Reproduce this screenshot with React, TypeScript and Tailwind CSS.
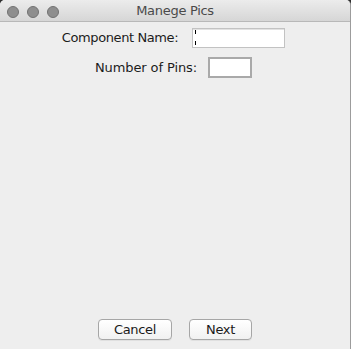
const font = { fontFamily: '"DejaVu Sans", "Liberation Sans", sans-serif' };

function TrafficLight() {
  return <span className="block h-[12px] w-[12px] rounded-full border border-[#727272] bg-[#8e8e8e]" />;
}

function MacButton({ label, width }: { label: string; width: string }) {
  return (
    <button
      className={`flex h-[21px] ${width} items-center justify-center rounded-[4px] border border-[#a6a6a6] bg-gradient-to-b from-white to-[#f1f1f1] text-[13px] tracking-[-0.3px] text-[#1a1a1a] shadow-[0_1px_0_rgba(0,0,0,0.06)]`}
    >
      {label}
    </button>
  );
}

export default function App() {
  return (
    <div className="h-[349px] w-[351px] bg-[#2e2e2e]" style={font}>
      <div className="flex h-full w-full flex-col overflow-hidden rounded-t-[5px] border-r border-[#9c9c9c] bg-[#eeeeee]">
        {/* title bar */}
        <div className="relative flex h-[22px] shrink-0 items-center justify-center border-b border-[#b8b8b8] bg-gradient-to-b from-[#ececec] to-[#d6d6d6]">
          <div className="absolute left-[7px] top-[6px] flex gap-[8px]">
            <TrafficLight />
            <TrafficLight />
            <TrafficLight />
          </div>
          <span className="text-[13px] tracking-[-0.3px] text-[#4a4a4a]">Manege Pics</span>
        </div>

        {/* form */}
        <div className="flex flex-1 flex-col pt-[6px]">
          <div className="flex items-center justify-center gap-[14px] pr-[3px]">
            <span className="text-[13px] tracking-[-0.4px] text-[#1c1c1c]">Component Name:</span>
            <div className="relative h-[20px] w-[93px] border border-[#c2c2c2] bg-white shadow-[inset_0_1px_0_#e2e2e2]">
              <span className="absolute left-[2px] top-[1px] h-[4px] w-px bg-black" />
              <span className="absolute left-[2px] top-[12px] h-[4px] w-px bg-black" />
            </div>
          </div>
          <div className="mt-[9px] flex items-center justify-center gap-[11px] pr-[3px]">
            <span className="text-[13px] tracking-[-0.1px] text-[#1c1c1c]">Number of Pins:</span>
            <div className="h-[21px] w-[44px] border-2 border-[#a9a9a9] bg-white" />
          </div>
        </div>

        {/* footer */}
        <div className="flex shrink-0 justify-center gap-[17px] pb-[9px]">
          <MacButton label="Cancel" width="w-[74px]" />
          <MacButton label="Next" width="w-[63px]" />
        </div>
      </div>
    </div>
  );
}
